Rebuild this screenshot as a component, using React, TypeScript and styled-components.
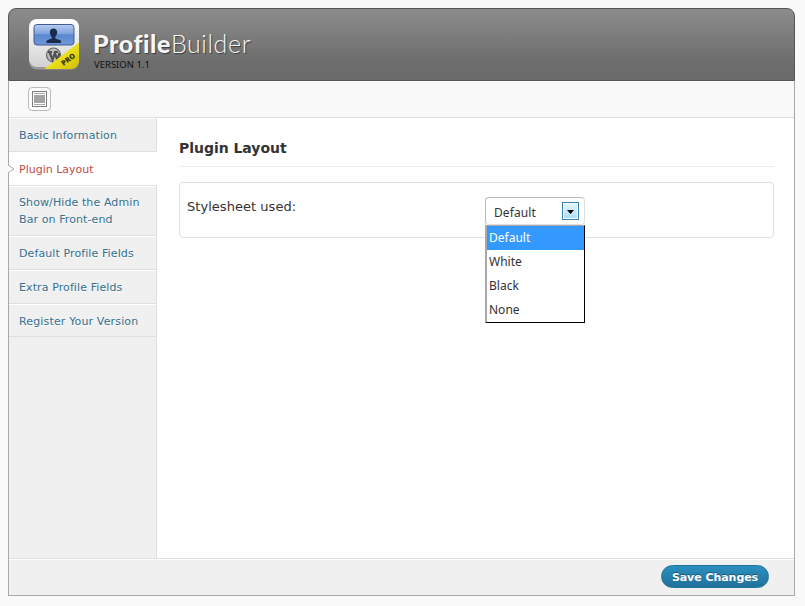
import React from 'react';
import styled, { createGlobalStyle } from 'styled-components';

const Global = createGlobalStyle`
  * { box-sizing: border-box; }
  body { margin: 0; background: #f9f9f9; font-family: "DejaVu Sans", Verdana, sans-serif; color: #333; }
`;

const Panel = styled.div`
  width: 787px;
  height: 588px;
  margin: 8px 0 0 8px;
  display: flex;
  flex-direction: column;
`;

const Header = styled.header`
  height: 73px;
  flex: none;
  display: flex;
  padding: 9px 0 0 19px;
  border: 1px solid #555;
  border-radius: 8px 8px 0 0;
  background: linear-gradient(#8c8c8c, #6d6d6d 75%, #6b6b6b);
`;

const Logo = styled.svg`
  width: 54px;
  height: 54px;
  flex: none;
`;

const Brand = styled.div`
  padding: 10px 0 0 11px;
`;

const Title = styled.h1`
  display: flex;
  margin: 0;
  font: 900 25px/30px Lato, sans-serif;
  color: #f6f6f6;
  text-shadow: 1px 1px 1px rgba(0, 0, 0, 0.5);
`;

const Word = styled.span<{ $light?: boolean }>`
  font-weight: ${(p) => (p.$light ? 300 : 900)};
  letter-spacing: ${(p) => (p.$light ? '0.6px' : '0.55px')};
`;

const Version = styled.div`
  font: 9.500px/12px "Noto Sans", sans-serif;
  color: #111;
  padding: 1px 0 0 1px;
`;

const Body = styled.div`
  flex: 1;
  display: flex;
  flex-direction: column;
  border: 1px solid #a8a8a8;
  border-top: 0;
`;

const Toolbar = styled.div`
  height: 37px;
  flex: none;
  padding: 6px 0 0 19px;
  background: #f9f9f9;
  border-bottom: 1px solid #dfdfdf;
`;

const ToggleButton = styled.button`
  display: block;
  width: 23px;
  height: 24px;
  padding: 3px;
  border: 1px solid #bbb;
  border-radius: 4px;
  background: #fbfbfb;
  svg { display: block; }
`;

const Columns = styled.div`
  flex: 1;
  display: flex;
  background: #fff;
`;

const Sidebar = styled.nav`
  width: 148px;
  flex: none;
  background: #f0f0f0;
  border-right: 1px solid #dfdfdf;
`;

const NavItem = styled.a<{ $active?: boolean; $height: number }>`
  position: relative;
  display: flex;
  align-items: center;
  height: ${(p) => p.$height}px;
  width: ${(p) => (p.$active ? '148px' : 'auto')};
  padding: 0 8px 0 10px;
  border-top: 1px solid #fff;
  border-bottom: 1px solid #dfdfdf;
  background: ${(p) => (p.$active ? '#fff' : '#f0f0f0')};
  color: ${(p) => (p.$active ? '#bd4c48' : '#336f8f')};
  font-size: 11px;
  line-height: 17px;
  letter-spacing: ${(p) => (p.$active ? '0' : '0.1px')};
  text-shadow: 0 1px 0 #fff;
  white-space: pre;

  &:last-child { padding-top: 1px; letter-spacing: 0.15px; }
`;

const Notch = styled.svg`
  position: absolute;
  left: -1px;
  top: 11px;
`;

const Content = styled.main`
  flex: 1;
  padding: 20px 20px 0 22px;
`;

const Heading = styled.h2`
  height: 29px;
  margin: 0 0 15px;
  border-bottom: 1px solid #ececec;
  font-size: 14px;
  line-height: 20px;
  letter-spacing: -0.03px;
`;

const Option = styled.section`
  height: 56px;
  display: flex;
  padding: 14px 0 0 7px;
  border: 1px solid #dfdfdf;
  border-radius: 4px;
`;

const Label = styled.label`
  width: 298px;
  font-size: 13px;
  line-height: 20px;
  letter-spacing: 0.04px;
`;

const Select = styled.div`
  position: relative;
  width: 100px;
  height: 28px;
  display: flex;
  align-items: center;
  padding: 0 5px 0 8px;
  border: 1px solid #dfdfdf;
  border-top-color: #bbb;
  border-left-color: #bbb;
  border-radius: 4px;
  background: #fff;
  font: 12px/24px "Noto Sans", sans-serif;
`;

const Value = styled.span`
  flex: 1;
  padding-top: 3px;
  letter-spacing: 0.1px;
`;

const Arrow = styled.svg`
  width: 17px;
  height: 18px;
  flex: none;
`;

const Menu = styled.ul`
  position: absolute;
  left: -1px;
  top: 27px;
  width: 100px;
  margin: 0;
  padding: 0;
  list-style: none;
  background: #fff;
  border: 1px solid #000;
  border-top-color: #a8a8a8;
  border-left: 2px solid #a8a8a8;
`;

const MenuItem = styled.li<{ $selected?: boolean }>`
  height: 24px;
  padding-left: 2px;
  background: ${(p) => (p.$selected ? '#3399ff' : '#fff')};
  color: ${(p) => (p.$selected ? '#fff' : '#333')};
`;

const Footer = styled.footer`
  height: 37px;
  flex: none;
  display: flex;
  justify-content: flex-end;
  padding: 5px 25px 0 0;
  border-top: 1px solid #dfdfdf;
  box-shadow: inset 0 1px 0 #fff;
  background: #f0f0f0;
`;

const SaveButton = styled.button`
  width: 108px;
  height: 23px;
  margin-top: 1px;
  padding: 2px 0 0;
  border: 1px solid #21759b;
  border-radius: 12px;
  background: linear-gradient(#2a8fbf, #21719a);
  color: #fff;
  font: bold 11px/20px "DejaVu Sans", Verdana, sans-serif;
  letter-spacing: -0.05px;
  text-shadow: 0 -1px 0 rgba(0, 0, 0, 0.35);
  white-space: nowrap;
`;

const navItems = [
  { label: 'Basic Information', height: 34 },
  { label: 'Plugin Layout', height: 34, active: true },
  { label: 'Show/Hide the Admin\nBar on Front-end', height: 50 },
  { label: 'Default Profile Fields', height: 34 },
  { label: 'Extra Profile Fields', height: 34 },
  { label: 'Register Your Version', height: 33 },
];

const ProductLogo = () => (
  <Logo viewBox="0 0 54 54">
    <defs>
      <linearGradient id="shell" x2="0" y2="1">
        <stop stopColor="#fff" />
        <stop offset="1" stopColor="#d2d2d2" />
      </linearGradient>
      <linearGradient id="screen" x2="0" y2="1">
        <stop stopColor="#b9cdf0" />
        <stop offset=".45" stopColor="#7fa3dd" />
        <stop offset=".5" stopColor="#5b87cf" />
        <stop offset="1" stopColor="#6f98da" />
      </linearGradient>
      <linearGradient id="ribbon" x2="1" y2="1">
        <stop offset=".3" stopColor="#f6ee2a" />
        <stop offset="1" stopColor="#d2bd00" />
      </linearGradient>
      <clipPath id="shellClip"><rect x="1" y="1" width="50" height="50" rx="8" /></clipPath>
    </defs>
    <rect x="1" y="1.5" width="50" height="50" rx="8" fill="#999" />
    <rect x="1" y="1" width="50" height="48" rx="8" fill="url(#shell)" />
    <rect x="6" y="6.5" width="40" height="20.5" rx="3" fill="url(#screen)" stroke="#3f5d93" />
    <path d="M18.500 25v-2c1-1.700 4-1.700 5.200-2.600v-1.700c-1.500-1.600-2-3.200-1.800-5.200.4-4 6.800-4 7.200 0 .2 2-.3 3.600-1.800 5.200v1.700c1.200.9 4.700.9 5.700 2.600v2z" fill="#1b2b4c" />
    <circle cx="25.500" cy="37" r="7" fill="#bdbdbd" stroke="#666" strokeWidth="1.200" />
    <path d="M20 34h4M26 34h4M21.500 34l3 8 2-6M26.500 34l2.800 8 2.200-7" fill="none" stroke="#505050" strokeWidth="2.200" />
    <g clipPath="url(#shellClip)">
      <path d="M16 51 51 24.500V51z" fill="url(#ribbon)" />
    </g>
    <text x="40" y="44" transform="rotate(-36 40 41)" textAnchor="middle" fontFamily="Open Sans, sans-serif" fontSize="7.300" fontWeight="800" fill="#3a3808">PRO</text>
  </Logo>
);

export default function App() {
  return (
    <>
      <Global />
      <Panel>
        <Header>
          <ProductLogo />
          <Brand>
            <Title><Word>Profile</Word><Word $light>Builder</Word></Title>
            <Version>VERSION 1.1</Version>
          </Brand>
        </Header>
        <Body>
          <Toolbar>
            <ToggleButton aria-label="Toggle sections">
              <svg width="15" height="16" viewBox="0 0 15 16" shapeRendering="crispEdges">
                <rect x=".5" y=".5" width="14" height="15" fill="#fff" stroke="#808080" />
                <path d="M2 2.500h11M2 13.500h11" stroke="#aaa" />
                <rect x="2" y="4" width="11" height="8" fill="#a3a3a3" />
              </svg>
            </ToggleButton>
          </Toolbar>
          <Columns>
            <Sidebar>
              {navItems.map((item) => (
                <NavItem key={item.label} $height={item.height} $active={item.active}>
                  {item.active && (
                    <Notch width="7" height="10" viewBox="0 0 7 10">
                      <path d="M0 1 6 5 0 9" fill="#f9f9f9" stroke="#aaa" />
                    </Notch>
                  )}
                  {item.label}
                </NavItem>
              ))}
            </Sidebar>
            <Content>
              <Heading>Plugin Layout</Heading>
              <Option>
                <Label>Stylesheet used:</Label>
                <Select>
                  <Value>Default</Value>
                  <Arrow viewBox="0 0 17 18">
                    <defs>
                      <linearGradient id="arrowFill" x2="0" y2="1">
                        <stop stopColor="#eaf7fe" />
                        <stop offset="1" stopColor="#a9daf5" />
                      </linearGradient>
                    </defs>
                    <rect x=".5" y=".5" width="16" height="17" fill="url(#arrowFill)" stroke="#3c7fb1" />
                    <rect x="1.500" y="1.500" width="14" height="15" fill="none" stroke="#f3fbff" />
                    <path d="M5 8h7l-3.500 4z" fill="#000" />
                  </Arrow>
                  <Menu>
                    {['Default', 'White', 'Black', 'None'].map((name, i) => (
                      <MenuItem key={name} $selected={i === 0}>{name}</MenuItem>
                    ))}
                  </Menu>
                </Select>
              </Option>
            </Content>
          </Columns>
          <Footer>
            <SaveButton>Save Changes</SaveButton>
          </Footer>
        </Body>
      </Panel>
    </>
  );
}
